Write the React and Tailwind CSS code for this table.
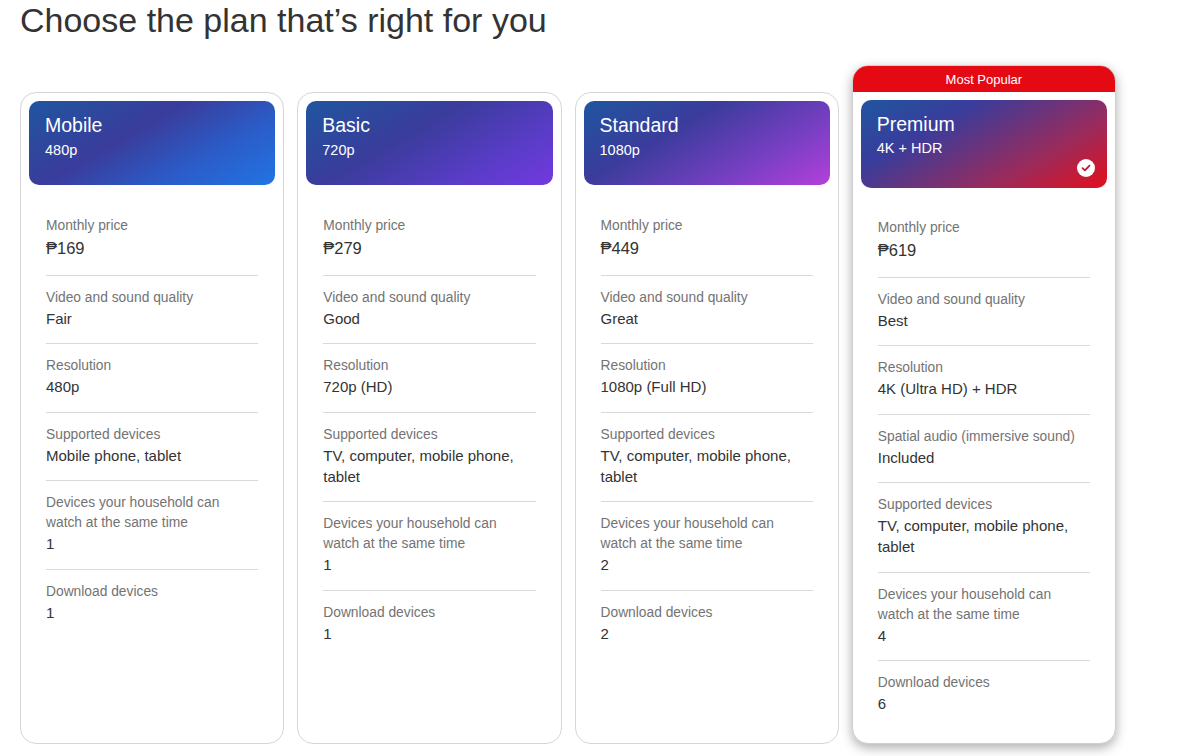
import React from 'react';

const plans = [
    {
        name: 'Mobile',
        sub: '480p',
        gradient: 'bg-[linear-gradient(150deg,#1f56a0_0%,#3a3c9b_40%,#2b5cc8_70%,#2174e4_100%)]',
        rows: [
            ['Monthly price', '₱169'],
            ['Video and sound quality', 'Fair'],
            ['Resolution', '480p'],
            ['Supported devices', 'Mobile phone, tablet'],
            ['Devices your household can watch at the same time', '1'],
            ['Download devices', '1'],
        ],
    },
    {
        name: 'Basic',
        sub: '720p',
        gradient: 'bg-[linear-gradient(150deg,#1f56a0_0%,#3a3c9b_40%,#5a3cc8_75%,#7339e0_100%)]',
        rows: [
            ['Monthly price', '₱279'],
            ['Video and sound quality', 'Good'],
            ['Resolution', '720p (HD)'],
            ['Supported devices', 'TV, computer, mobile phone, tablet'],
            ['Devices your household can watch at the same time', '1'],
            ['Download devices', '1'],
        ],
    },
    {
        name: 'Standard',
        sub: '1080p',
        gradient: 'bg-[linear-gradient(150deg,#1f56a0_0%,#3a3c9b_35%,#7a3fc4_72%,#b53fdb_100%)]',
        rows: [
            ['Monthly price', '₱449'],
            ['Video and sound quality', 'Great'],
            ['Resolution', '1080p (Full HD)'],
            ['Supported devices', 'TV, computer, mobile phone, tablet'],
            ['Devices your household can watch at the same time', '2'],
            ['Download devices', '2'],
        ],
    },
    {
        name: 'Premium',
        sub: '4K + HDR',
        popular: true,
        gradient: 'bg-[linear-gradient(150deg,#1f56a0_0%,#3a3c9b_30%,#9a2b5c_70%,#e30f1c_100%)]',
        rows: [
            ['Monthly price', '₱619'],
            ['Video and sound quality', 'Best'],
            ['Resolution', '4K (Ultra HD) + HDR'],
            ['Spatial audio (immersive sound)', 'Included'],
            ['Supported devices', 'TV, computer, mobile phone, tablet'],
            ['Devices your household can watch at the same time', '4'],
            ['Download devices', '6'],
        ],
    },
];

// Small white check badge shown on the selected plan
const CheckBadge = () => (
    <svg width="18" height="18" viewBox="0 0 18 18">
        <circle cx="9" cy="9" r="9" fill="#fff" />
        <path d="M5.6 9.2l2.3 2.2 4.6-4.8" fill="none" stroke="#c5162e" strokeWidth="1.8" strokeLinecap="round" strokeLinejoin="round" />
    </svg>
);

const PlanCard = ({ plan }) => {
    const { name, sub, gradient, rows, popular } = plan;

    return (
        <div
            className={`flex flex-col rounded-2xl border bg-white overflow-hidden ${
                popular
                    ? 'border-[#cfcfcf] shadow-[0_4px_12px_rgba(0,0,0,0.32)]'
                    : 'mt-[27px] border-[#d6d6d6]'
            }`}
        >
            {popular && (
                <div className="bg-[#e50914] h-[26px] flex items-center justify-center text-white text-[13px] font-medium leading-none">
                    Most Popular
                </div>
            )}

            {/* Gradient header */}
            <div className={`mx-2 mt-2 rounded-[10px] px-4 pt-3 text-white ${gradient} ${popular ? 'pb-[11px]' : 'pb-[25px]'}`}>
                <div className="text-[19.5px] leading-6">{name}</div>
                <div className={`text-[14.5px] leading-5 ${popular ? 'mt-[2px]' : 'mt-[3px]'}`}>{sub}</div>
                {popular && (
                    <div className="flex justify-end mt-px -mr-1">
                        <CheckBadge />
                    </div>
                )}
            </div>

            {/* Feature list */}
            <div className={`mx-[25px] pb-[29px] ${popular ? 'mt-[18px]' : 'mt-[19px]'}`}>
                {rows.map(([label, value], i) => (
                    <div
                        key={label}
                        className={`pt-3 ${i < rows.length - 1 ? 'pb-[14.5px] border-b border-[#d9d9d9]' : ''}`}
                    >
                        <div className="text-[13.8px] leading-5 text-[#737373]">{label}</div>
                        <div
                            className={`text-[#333] ${
                                i === 0 ? 'text-[16.5px] leading-[23px] mt-px' : 'text-[15px] leading-[21px]'
                            }`}
                        >
                            {value}
                        </div>
                    </div>
                ))}
            </div>
        </div>
    );
};

export default function App() {
    return (
        <div className="w-[1200px] h-[756px] bg-white overflow-hidden font-['Liberation_Sans',Arial,sans-serif]">
            <h1 className="pl-5 pt-[2px] text-[34px] leading-9 text-[#333] font-normal">
                Choose the plan that’s right for you
            </h1>

            <div className="ml-5 mt-[27px] w-[1096px] grid grid-cols-4 gap-[13px]">
                {plans.map((p) => (
                    <PlanCard key={p.name} plan={p} />
                ))}
            </div>
        </div>
    );
}
